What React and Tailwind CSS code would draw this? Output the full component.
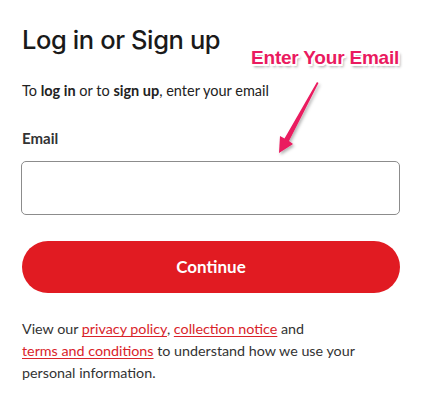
import React from "react";

export default function App() {
  return (
    <div className="relative w-[421px] h-[400px] bg-white overflow-hidden">
      <div className="px-[22px] pt-[24px] flex flex-col">
        <h1 className="text-[25.5px] leading-[32px] font-medium text-[#1a1a1a] tracking-[-0.4px] [font-family:Inter,sans-serif]">
          Log in or Sign up
        </h1>
        <p className="mt-[25px] text-[14.5px] leading-[20px] text-[#222] [font-family:Lato,sans-serif]">
          To <b className="font-bold">log in</b> or to <b className="font-bold">sign up</b>, enter your email
        </p>
        <label className="mt-[27px] text-[15px] leading-[20px] font-bold text-[#333] [font-family:Lato,sans-serif]">
          Email
        </label>
        <input
          type="email"
          className="mt-[13px] w-[379px] h-[54px] -ml-[1px] rounded-[5px] border border-[#8c8c8c] bg-white outline-none"
        />
        <button className="mt-[26px] w-[378px] h-[52px] rounded-full bg-[#e11b22] text-white text-[17px] font-bold [font-family:Lato,sans-serif]">
          Continue
        </button>
        <p className="mt-[25px] text-[14.3px] leading-[22px] text-[#333] [font-family:Lato,sans-serif]">
          View our{" "}
          <a className="text-[#d9232a] underline underline-offset-2">privacy policy</a>,{" "}
          <a className="text-[#d9232a] underline underline-offset-2">collection notice</a> and
          <br />
          <a className="text-[#d9232a] underline underline-offset-2">terms and conditions</a> to understand how we use your
          <br />
          personal information.
        </p>
      </div>

      <div className="absolute left-[251px] top-[46px] text-[19px] leading-[24px] font-bold tracking-[-0.2px] text-[#ea1a5f] [font-family:'Liberation_Sans',Arial,sans-serif] [text-shadow:-1.5px_-1.5px_0_#fff,1.5px_-1.5px_0_#fff,-1.5px_1.5px_0_#fff,1.5px_1.5px_0_#fff,0_1.5px_0_#fff,1.5px_0_0_#fff,2px_3px_3px_rgba(0,0,0,0.4)]">
        Enter Your Email
      </div>

      <svg className="absolute left-0 top-0" width="421" height="400" viewBox="0 0 421 400">
        <defs>
          <filter id="sh" x="-50%" y="-50%" width="200%" height="200%">
            <feDropShadow dx="1.5" dy="2" stdDeviation="1.5" floodColor="#000" floodOpacity="0.3" />
          </filter>
        </defs>
        <polygon
          points="317,82 318.5,83 289,141 293,144 279,153 280,136 284.5,138.5"
          fill="#ea1a5f"
          filter="url(#sh)"
        />
      </svg>
    </div>
  );
}
